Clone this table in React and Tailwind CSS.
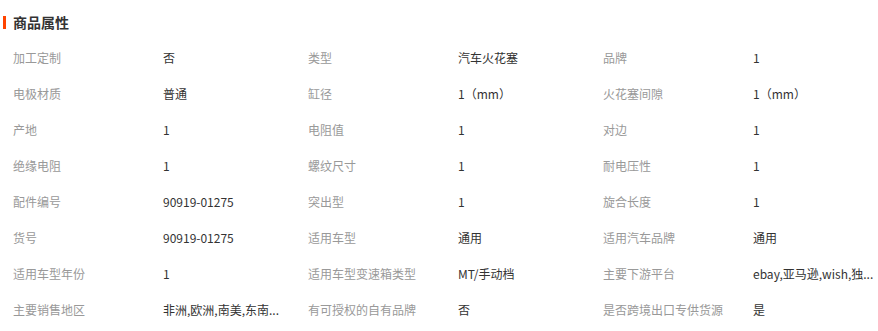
import React from "react";

const rows = [
  [["加工定制", "否"], ["类型", "汽车火花塞"], ["品牌", "1"]],
  [["电极材质", "普通"], ["缸径", "1（mm）"], ["火花塞间隙", "1（mm）"]],
  [["产地", "1"], ["电阻值", "1"], ["对边", "1"]],
  [["绝缘电阻", "1"], ["螺纹尺寸", "1"], ["耐电压性", "1"]],
  [["配件编号", "90919-01275"], ["突出型", "1"], ["旋合长度", "1"]],
  [["货号", "90919-01275"], ["适用车型", "通用"], ["适用汽车品牌", "通用"]],
  [["适用车型年份", "1"], ["适用车型变速箱类型", "MT/手动档"], ["主要下游平台", "ebay,亚马逊,wish,独..."]],
  [["主要销售地区", "非洲,欧洲,南美,东南..."], ["有可授权的自有品牌", "否"], ["是否跨境出口专供货源", "是"]],
];

export default function App() {
  return (
    <div
      className="w-[878px] h-[331px] bg-white overflow-hidden"
      style={{ fontFamily: '"Noto Sans CJK SC", "Noto Sans", sans-serif' }}
    >
      <div className="flex items-center h-[14px] mt-[15px] mb-[11px]">
        <div className="w-[3px] h-[13px] bg-[#ff4400] ml-[3px]" />
        <div className="ml-[7px] text-[14px] font-bold text-[#333] leading-[14px]">商品属性</div>
      </div>
      <div className="flex flex-col pl-[13px]">
        {rows.map((row, i) => (
          <div key={i} className="flex h-[36px] items-center text-[12px] leading-[16px]">
            {row.map(([k, v], j) => (
              <div key={j} className="flex w-[295px] shrink-0">
                <div className="w-[150px] shrink-0 text-[#999] whitespace-nowrap">{k}</div>
                <div className="w-[125px] shrink-0 text-[#333] whitespace-nowrap">{v}</div>
              </div>
            ))}
          </div>
        ))}
      </div>
    </div>
  );
}
